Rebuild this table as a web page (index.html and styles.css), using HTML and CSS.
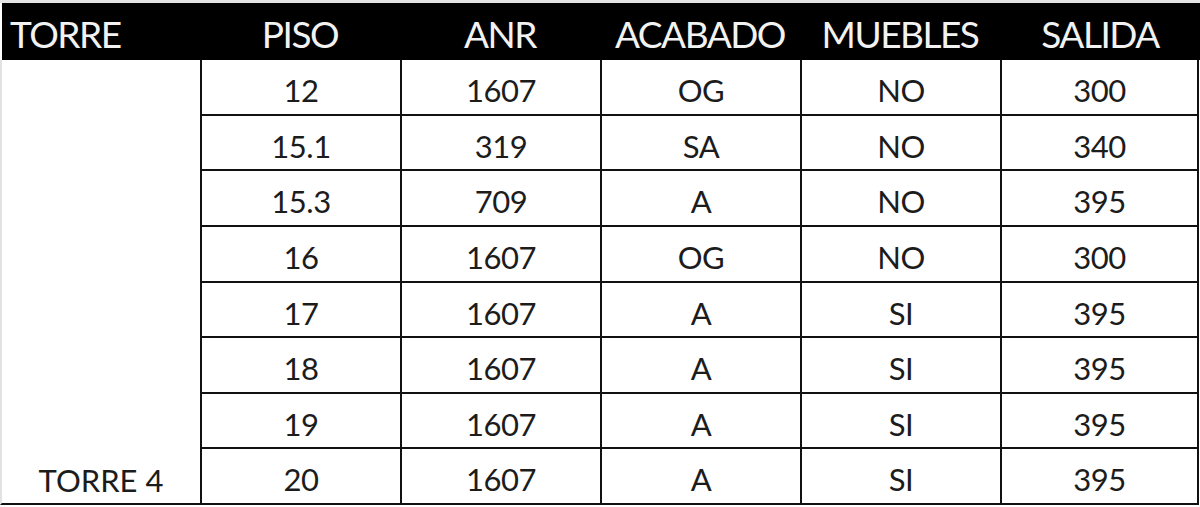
FILE: index.html
```html
<!DOCTYPE html>
<html lang="es">
<head>
<meta charset="utf-8">
<title>Torre 4</title>
<link rel="stylesheet" href="styles.css">
</head>
<body>
<div class="sheet">
  <div class="hd hd-first">TORRE</div>
  <div class="hd">PISO</div>
  <div class="hd">ANR</div>
  <div class="hd">ACABADO</div>
  <div class="hd">MUEBLES</div>
  <div class="hd">SALIDA</div>

  <div class="torre">TORRE 4</div>

  <div class="c">12</div><div class="c">1607</div><div class="c">OG</div><div class="c">NO</div><div class="c last">300</div>
  <div class="c">15.1</div><div class="c">319</div><div class="c">SA</div><div class="c">NO</div><div class="c last">340</div>
  <div class="c">15.3</div><div class="c">709</div><div class="c">A</div><div class="c">NO</div><div class="c last">395</div>
  <div class="c">16</div><div class="c">1607</div><div class="c">OG</div><div class="c">NO</div><div class="c last">300</div>
  <div class="c">17</div><div class="c">1607</div><div class="c">A</div><div class="c">SI</div><div class="c last">395</div>
  <div class="c">18</div><div class="c">1607</div><div class="c">A</div><div class="c">SI</div><div class="c last">395</div>
  <div class="c">19</div><div class="c">1607</div><div class="c">A</div><div class="c">SI</div><div class="c last">395</div>
  <div class="c">20</div><div class="c">1607</div><div class="c">A</div><div class="c">SI</div><div class="c last">395</div>
</div>
</body>
</html>
```

FILE: styles.css
```css
html, body {
  margin: 0;
  padding: 0;
  background: #ffffff;
}

body {
  border-top: 3px solid #e4e4e4;
  font-family: Lato, "Liberation Sans", sans-serif;
}

.sheet {
  margin-left: 2px;
  display: grid;
  grid-template-columns: 198px 200px 200px 200px 200px 200px;
  grid-template-rows: 57px 56px 55px 56px 56px 55px 56px 55px 56px;
}

.hd {
  background: #000000;
  color: #f2f2f2;
  font-size: 37px;
  letter-spacing: -1.5px;
  display: flex;
  align-items: center;
  justify-content: center;
  padding-top: 3px;
  box-sizing: border-box;
}

.hd-first {
  justify-content: flex-start;
  padding-left: 8px;
}

.torre {
  grid-column: 1;
  grid-row: 2 / span 8;
  display: flex;
  align-items: flex-end;
  justify-content: center;
  padding-bottom: 4px;
  font-size: 31px;
  color: #1c1c1c;
  border-left: 2px solid #e2e2e2;
  margin-left: -2px;
  border-bottom: 2px solid #111;
  box-sizing: border-box;
}

.c {
  display: flex;
  align-items: center;
  justify-content: center;
  padding-top: 6px;
  font-size: 31px;
  letter-spacing: -0.5px;
  color: #1c1c1c;
  border-left: 2px solid #111;
  border-bottom: 2px solid #111;
  box-sizing: border-box;
}

.c.last {
  border-right: 2px solid #111;
  margin-right: 1px;
}
```
